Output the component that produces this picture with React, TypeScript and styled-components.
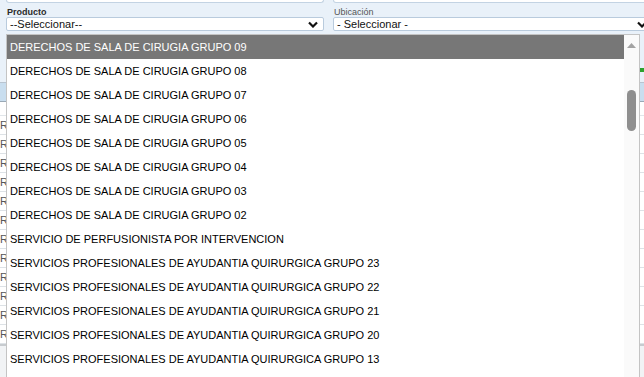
import styled, { createGlobalStyle } from "styled-components";

const GlobalStyle = createGlobalStyle`
  html, body {
    margin: 0;
    padding: 0;
    background: #e9f1f9;
  }
  * {
    box-sizing: border-box;
  }
`;

const Page = styled.div`
  position: relative;
  width: 644px;
  height: 377px;
  overflow: hidden;
  background: #e9f1f9;
  font-family: "Liberation Sans", Arial, sans-serif;
`;

const FieldRow = styled.div`
  display: grid;
  grid-template-columns: 318px 320px;
  column-gap: 9px;
  padding-left: 6px;
`;

const CutInput = styled.div`
  height: 3px;
  background: #fff;
  border: 1px solid #c3d3e3;
  border-top: none;
  border-radius: 0 0 3px 3px;
`;

const Field = styled.div`
  display: flex;
  flex-direction: column;
`;

const Label = styled.label<{ $bold?: boolean }>`
  height: 14px;
  padding: 4px 0 0 1px;
  font-size: 9px;
  line-height: 10px;
  font-weight: ${(p) => (p.$bold ? 700 : 400)};
  color: ${(p) => (p.$bold ? "#2a2a2a" : "#555")};
`;

const SelectBox = styled.div`
  display: flex;
  align-items: center;
  justify-content: space-between;
  height: 14px;
  padding: 0 5px 0 3px;
  background: #fff;
  border: 1px solid #b9cbdd;
  border-radius: 2px;
  font-size: 11px;
  color: #111;
`;

const Chevron = () => (
  <svg width="10" height="7" viewBox="0 0 10 7">
    <polyline points="1,1.5 5,5.5 9,1.5" fill="none" stroke="#111" strokeWidth="2.2" />
  </svg>
);

const Grid = styled.div`
  margin-top: 4px;
  display: flex;
  flex-direction: column;
`;

const Toolbar = styled.div`
  height: 48px;
  display: flex;
  align-items: flex-end;
  justify-content: flex-end;
  padding-bottom: 10px;
  border-bottom: 1px solid #b8c4d0;
`;

const GreenMark = styled.div`
  width: 4px;
  height: 4px;
  background: #2ea12e;
`;

const HeaderRow = styled.div`
  height: 19px;
  background: #c9deef;
  border-bottom: 1px solid #9aa9b6;
`;

const FilterRow = styled.div`
  height: 14px;
  background: #fff;
  border-bottom: 1px solid #e1e6ea;
`;

const DataRow = styled.div`
  height: 19px;
  display: flex;
  align-items: center;
  background: #fff;
  border-bottom: 1px solid #dde2e6;
  font-size: 11px;
  color: #555;
`;

const Footer = styled.div`
  height: 40px;
  background: #f1f3f5;
  border-top: 2px solid #c7cbcf;
`;

const DropList = styled.div`
  position: absolute;
  top: 34px;
  left: 6px;
  width: 634px;
  height: 360px;
  display: flex;
  background: #fff;
  border: 1px solid #c4c4c4;
  border-bottom: none;
`;

const Options = styled.ul`
  flex: 1;
  margin: 0;
  padding: 0;
  list-style: none;
`;

const Option = styled.li<{ $active?: boolean }>`
  height: 24px;
  display: flex;
  align-items: center;
  padding-left: 3px;
  font-size: 11px;
  white-space: nowrap;
  background: ${(p) => (p.$active ? "#777777" : "#fff")};
  color: ${(p) => (p.$active ? "#fff" : "#000")};
`;

const ScrollTrack = styled.div`
  width: 15px;
  display: flex;
  flex-direction: column;
  align-items: center;
  padding-top: 8px;
  background: #fafafa;
`;

const Thumb = styled.div`
  width: 9px;
  height: 41px;
  margin-top: 42px;
  border-radius: 5px;
  background: #8f8f8f;
`;

const ArrowUp = () => (
  <svg width="9" height="5" viewBox="0 0 9 5">
    <polygon points="0,5 4.5,0 9,5" fill="#a3a3a3" />
  </svg>
);

const options = [
  "DERECHOS DE SALA DE CIRUGIA GRUPO 09",
  "DERECHOS DE SALA DE CIRUGIA GRUPO 08",
  "DERECHOS DE SALA DE CIRUGIA GRUPO 07",
  "DERECHOS DE SALA DE CIRUGIA GRUPO 06",
  "DERECHOS DE SALA DE CIRUGIA GRUPO 05",
  "DERECHOS DE SALA DE CIRUGIA GRUPO 04",
  "DERECHOS DE SALA DE CIRUGIA GRUPO 03",
  "DERECHOS DE SALA DE CIRUGIA GRUPO 02",
  "SERVICIO DE PERFUSIONISTA POR INTERVENCION",
  "SERVICIOS PROFESIONALES DE AYUDANTIA QUIRURGICA GRUPO 23",
  "SERVICIOS PROFESIONALES DE AYUDANTIA QUIRURGICA GRUPO 22",
  "SERVICIOS PROFESIONALES DE AYUDANTIA QUIRURGICA GRUPO 21",
  "SERVICIOS PROFESIONALES DE AYUDANTIA QUIRURGICA GRUPO 20",
  "SERVICIOS PROFESIONALES DE AYUDANTIA QUIRURGICA GRUPO 13",
];

const rows = Array.from({ length: 12 }, (_, i) => i);

const App = (): JSX.Element => {
  return (
    <>
      <GlobalStyle />
      <Page>
        <FieldRow>
          <CutInput />
          <CutInput />
          <Field>
            <Label $bold>Producto</Label>
            <SelectBox>
              <span>--Seleccionar--</span>
              <Chevron />
            </SelectBox>
          </Field>
          <Field>
            <Label>Ubicación</Label>
            <SelectBox>
              <span>- Seleccionar -</span>
              <Chevron />
            </SelectBox>
          </Field>
        </FieldRow>

        <Grid>
          <Toolbar>
            <GreenMark />
          </Toolbar>
          <HeaderRow />
          <FilterRow />
          {rows.map((r) => (
            <DataRow key={r}>R</DataRow>
          ))}
          <Footer />
        </Grid>

        <DropList>
          <Options>
            {options.map((o, i) => (
              <Option key={o} $active={i === 0}>
                {o}
              </Option>
            ))}
          </Options>
          <ScrollTrack>
            <ArrowUp />
            <Thumb />
          </ScrollTrack>
        </DropList>
      </Page>
    </>
  );
};

export default App;
